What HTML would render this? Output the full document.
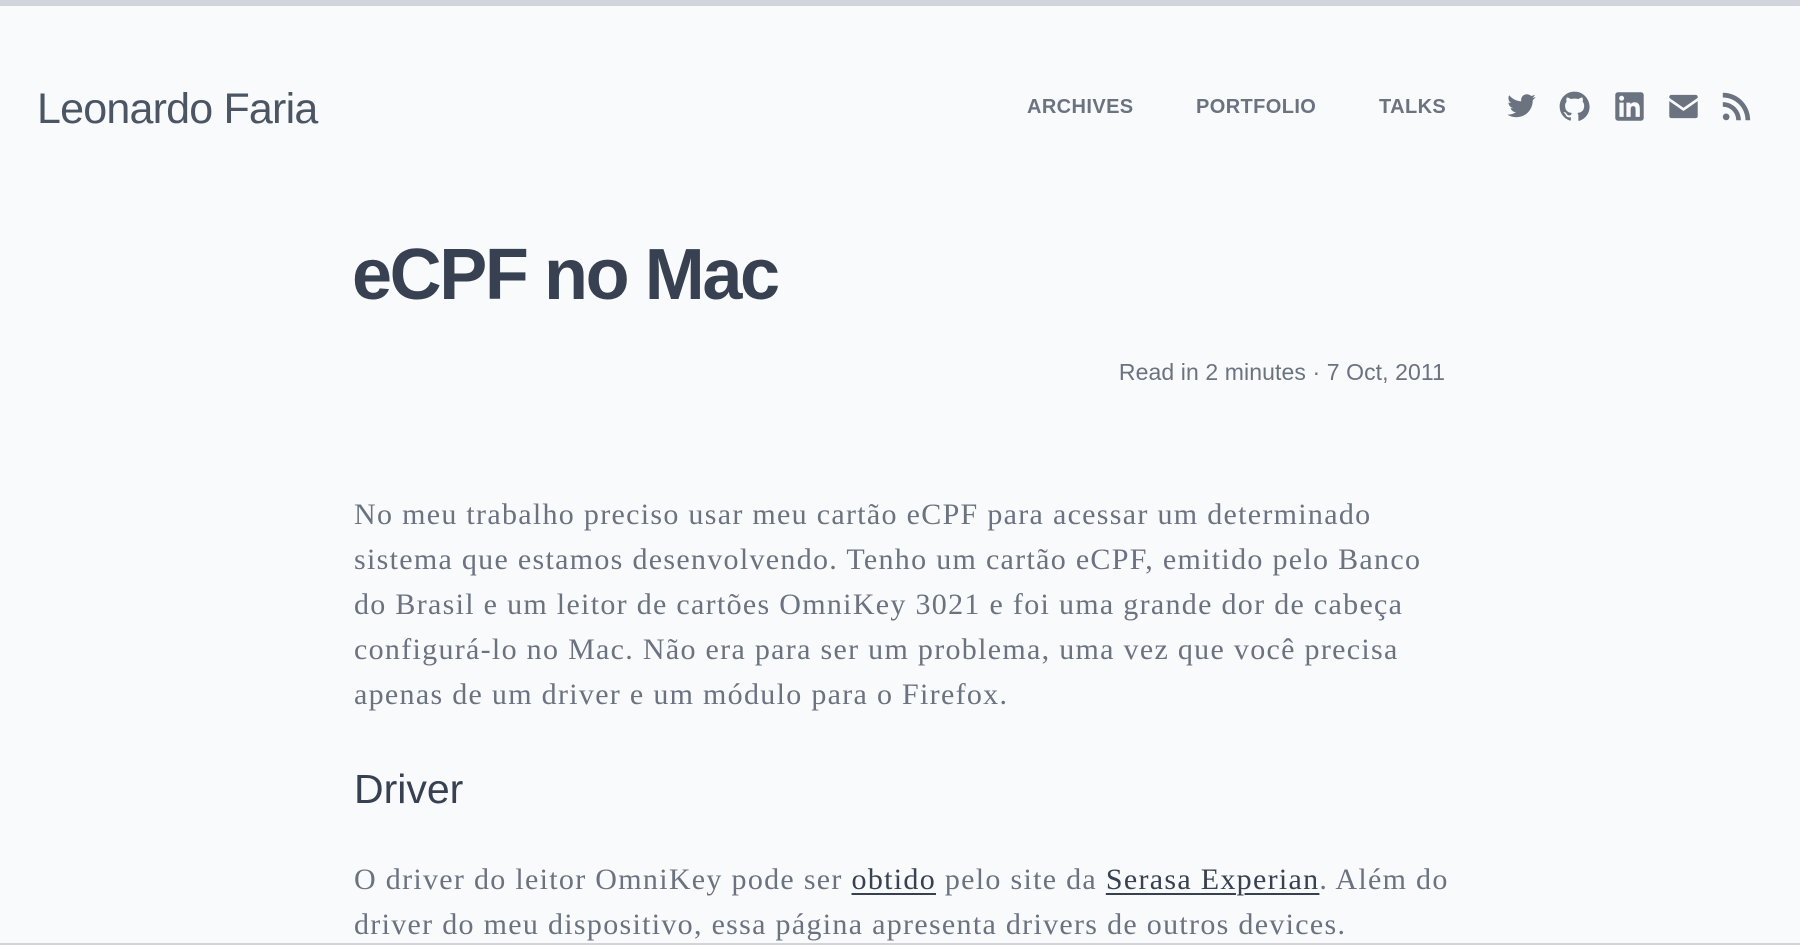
<!DOCTYPE html>
<html><head><meta charset="utf-8"><style>
*{margin:0;padding:0;box-sizing:border-box}
html,body{width:1800px;height:945px;overflow:hidden;background:#f9fafb}
body{position:relative;font-family:"Liberation Sans",sans-serif;color:#374151}
.bar{position:absolute;left:0;top:0;width:1800px;height:6px;background:#d1d5db}
.bot{position:absolute;left:0;bottom:0;width:1800px;height:2px;background:#d1d5db}
.logo{position:absolute;left:37px;top:82px;font-size:43px;line-height:54px;color:#4b5563;letter-spacing:-0.8px;white-space:nowrap}
.nav{position:absolute;top:95px;font-size:20px;font-weight:bold;color:#6b7280;line-height:24px;letter-spacing:0.4px}
.ic{position:absolute;top:91px;width:31px;height:31px;fill:#6b7280}
h1{position:absolute;left:352px;top:232px;font-size:72px;line-height:86px;font-weight:bold;color:#374151;letter-spacing:-2.4px;white-space:nowrap}
.meta{position:absolute;right:355px;top:359px;font-size:23px;line-height:26px;color:#6b7280;white-space:nowrap;letter-spacing:0.1px}
.p{position:absolute;left:354px;font-family:"Liberation Serif",serif;font-size:30px;line-height:45px;color:#6b7280;white-space:nowrap;letter-spacing:1.3px}
.p a{color:#374151;text-decoration:underline;text-decoration-thickness:2px;text-underline-offset:4px}
h2{position:absolute;left:354px;top:764px;font-size:41px;line-height:50px;font-weight:normal;color:#374151;white-space:nowrap}
</style></head><body>
<div class="bar"></div>
<div class="logo">Leonardo Faria</div>
<div class="nav" style="left:1027px">ARCHIVES</div>
<div class="nav" style="left:1196px">PORTFOLIO</div>
<div class="nav" style="left:1379px">TALKS</div>
<svg class="ic" style="left:1506px" viewBox="0 0 24 24"><path d="M23 4.6c-.8.4-1.7.6-2.6.7.9-.6 1.6-1.4 2-2.5-.9.5-1.9.9-2.9 1.1C18.6 3 17.4 2.5 16.200 2.5c-2.5 0-4.5 2-4.5 4.5 0 .4 0 .7.1 1C8 7.8 4.7 6 2.5 3.3c-.4.7-.6 1.4-.6 2.3 0 1.6.8 2.9 2 3.7-.7 0-1.4-.2-2-.6v.1c0 2.2 1.6 4 3.6 4.4-.4.1-.8.2-1.2.2-.3 0-.6 0-.8-.1.6 1.8 2.2 3.1 4.2 3.1-1.5 1.2-3.5 1.9-5.600 1.9H1c2 1.3 4.4 2 6.9 2 8.3 0 12.8-6.9 12.8-12.8v-.6c.9-.6 1.7-1.4 2.3-2.3z"/></svg>
<svg class="ic" style="left:1559px" viewBox="0 0 24 24"><path d="M12 .5C5.6.5.5 5.6.5 12c0 5.1 3.3 9.4 7.9 10.9.6.1.8-.2.8-.6v-2c-3.2.7-3.9-1.5-3.9-1.5-.5-1.3-1.3-1.700-1.3-1.7-1-.7.1-.7.1-.7 1.2.1 1.8 1.2 1.8 1.2 1 1.8 2.7 1.3 3.4 1 .1-.8.4-1.3.7-1.6-2.6-.3-5.3-1.3-5.3-5.7 0-1.3.5-2.3 1.2-3.1-.1-.3-.5-1.5.1-3.1 0 0 1-.3 3.2 1.2.9-.3 1.9-.4 2.9-.4s2 .1 2.9.4c2.2-1.5 3.2-1.2 3.2-1.2.6 1.6.2 2.8.1 3.1.7.8 1.2 1.9 1.2 3.1 0 4.4-2.7 5.4-5.3 5.7.4.4.8 1.1.8 2.2v3.3c0 .3.2.7.8.6 4.6-1.5 7.9-5.8 7.900-10.9C23.5 5.6 18.4.5 12 .5z"/></svg>
<svg class="ic" style="left:1614px" viewBox="0 0 24 24"><path d="M21 1H3C2 1 1 2 1 3v18c0 1 1 2 2 2h18c1 0 2-1 2-2V3c0-1-1-2-2-2zM7.5 20H4.2V9h3.3v11zM5.9 7.5c-1.1 0-1.9-.9-1.9-1.9s.9-1.9 1.9-1.9 1.9.9 1.9 1.9-.8 1.9-1.9 1.9zM20 20h-3.3v-5.4c0-1.3 0-2.9-1.8-2.9s-2 1.4-2 2.8V20H9.6V9h3.1v1.5c.4-.8 1.5-1.8 3.2-1.8 3.4 0 4.1 2.3 4.1 5.2V20z"/></svg>
<svg class="ic" style="left:1668px" viewBox="0 0 24 24"><path d="M2.5 3h19c.8 0 1.5.7 1.5 1.5v.8L12 13 1 5.3v-.8C1 3.7 1.7 3 2.5 3zM1 7.8l11 7.7 11-7.7v11.7c0 .8-.7 1.5-1.5 1.5h-19C1.7 21 1 20.3 1 19.5z"/></svg>
<svg class="ic" style="left:1721px" viewBox="0 0 24 24"><circle cx="4" cy="20" r="2.6"/><path d="M1.4 8.6v3.6c5.9 0 10.4 4.6 10.4 10.4h3.6C15.4 14.9 9.1 8.6 1.4 8.6zM1.4 1.4V5c9.7 0 17.6 7.9 17.6 17.6h3.6C22.6 10.9 13.1 1.4 1.4 1.4z"/></svg>
<h1>eCPF no Mac</h1>
<div class="meta">Read in 2 minutes · 7 Oct, 2011</div>
<div class="p" style="top:492px">No meu trabalho preciso usar meu cartão eCPF para acessar um determinado<br>sistema que estamos desenvolvendo. Tenho um cartão eCPF, emitido pelo Banco<br>do Brasil e um leitor de cartões OmniKey 3021 e foi uma grande dor de cabeça<br>configurá-lo no Mac. Não era para ser um problema, uma vez que você precisa<br>apenas de um driver e um módulo para o Firefox.</div>
<h2>Driver</h2>
<div class="p" style="top:857px">O driver do leitor OmniKey pode ser <a>obtido</a> pelo site da <a>Serasa Experian</a>. Além do<br>driver do meu dispositivo, essa página apresenta drivers de outros devices.</div>
<div class="bot"></div>
</body></html>
